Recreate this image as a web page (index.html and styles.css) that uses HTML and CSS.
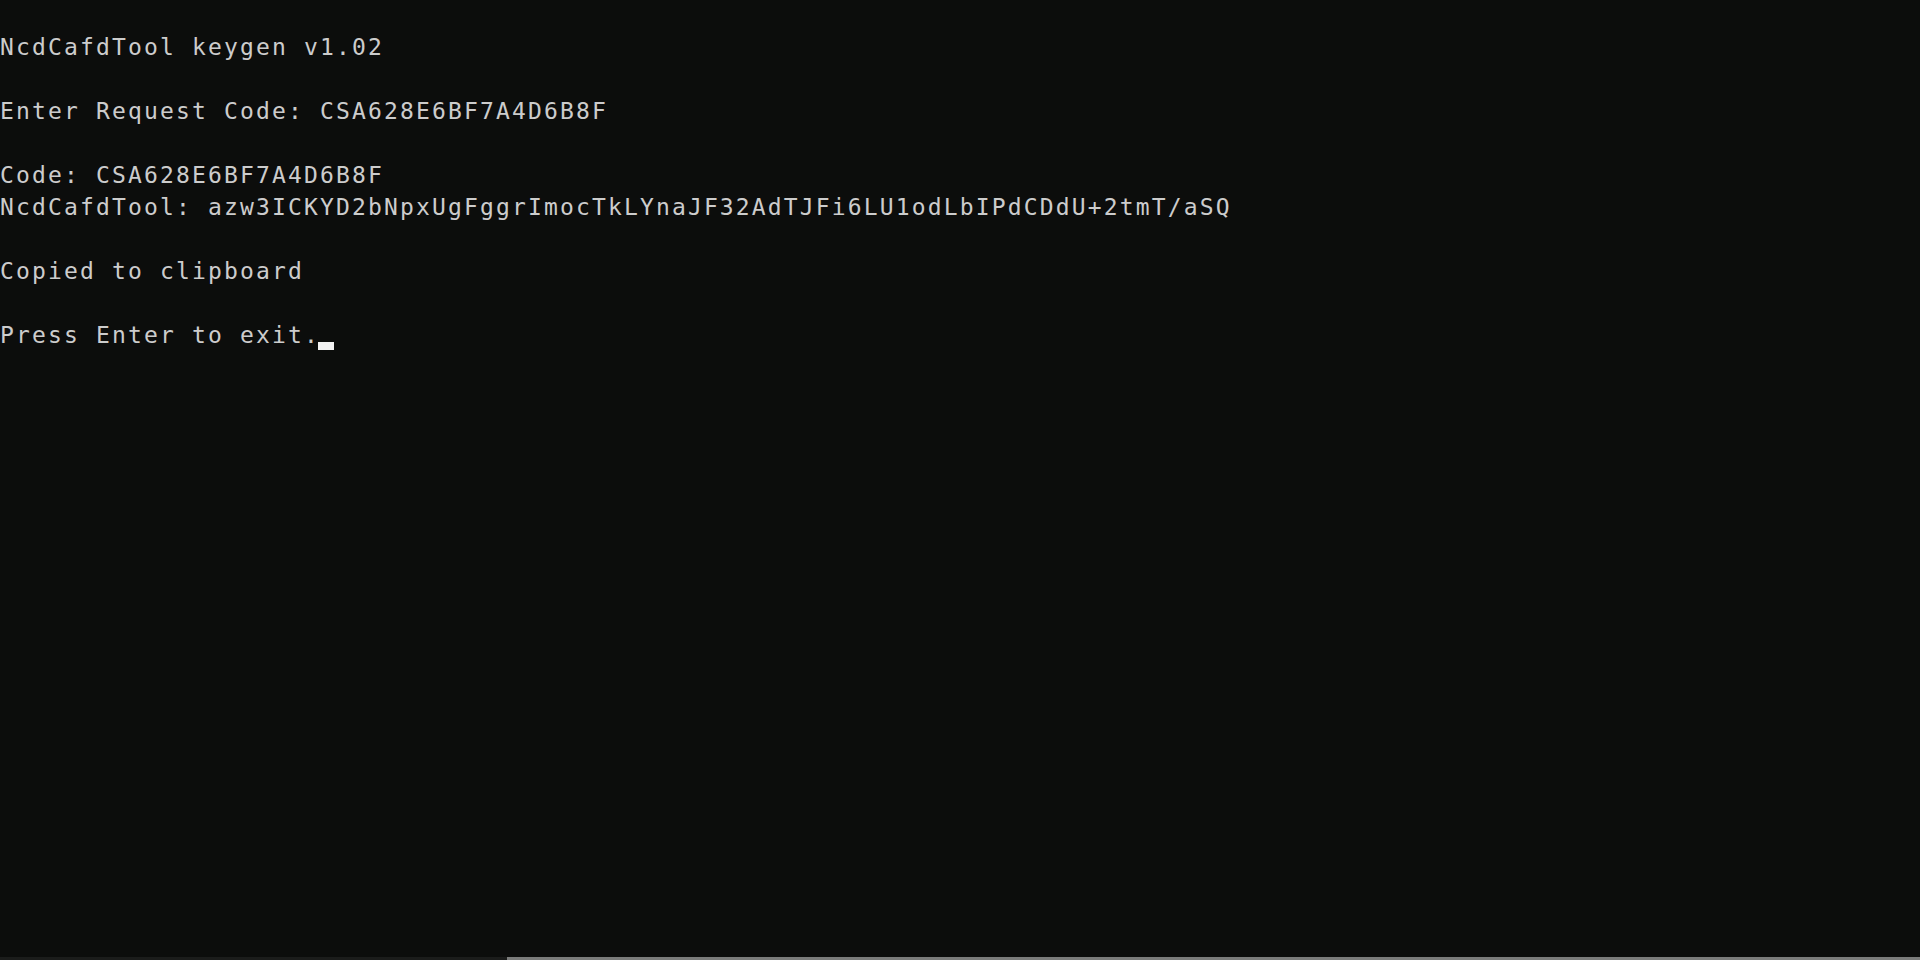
FILE: index.html
```html
<!DOCTYPE html>
<html lang="en">
<head>
<meta charset="utf-8">
<title>NcdCafdTool keygen</title>
<link rel="stylesheet" href="styles.css">
</head>
<body>
<div class="window">
  <pre class="console">NcdCafdTool keygen v1.02

Enter Request Code: CSA628E6BF7A4D6B8F

Code: CSA628E6BF7A4D6B8F
NcdCafdTool: azw3ICKYD2bNpxUgFggrImocTkLYnaJF32AdTJFi6LU1odLbIPdCDdU+2tmT/aSQ

Copied to clipboard

Press Enter to exit.<span class="cursor"></span></pre>
  <div class="hscroll">
    <div class="track-left"></div>
    <div class="thumb"></div>
  </div>
</div>
</body>
</html>
```
FILE: styles.css
```css
html, body {
  margin: 0;
  padding: 0;
  background: #0c0d0c;
}
.window {
  width: 1920px;
  height: 960px;
  display: flex;
  flex-direction: column;
  background: #0c0d0c;
  overflow: hidden;
}
.console {
  flex: 1;
  margin: 0;
  padding: 31px 0 0 0;
  font-family: "DejaVu Sans Mono", "Liberation Mono", monospace;
  font-size: 23px;
  letter-spacing: 2.15px;
  line-height: 32px;
  color: #cccccc;
  white-space: pre;
}
.cursor {
  display: inline-block;
  width: 16px;
  height: 32px;
  vertical-align: top;
  margin-top: -1px;
  margin-left: -2.15px;
  background: linear-gradient(to top, #f2f2f2 8px, transparent 8px);
}
.hscroll {
  height: 3px;
  display: flex;
}
.track-left {
  width: 507px;
  background: #1b1c1b;
}
.thumb {
  flex: 1;
  background: #7b7c7b;
}
```
